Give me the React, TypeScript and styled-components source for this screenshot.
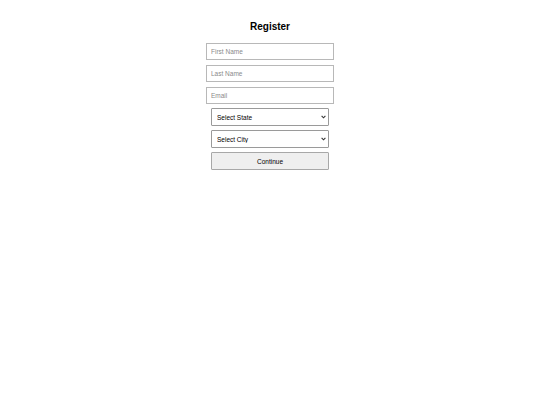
import React from "react";
import styled, { createGlobalStyle } from "styled-components";

const GlobalStyle = createGlobalStyle`
  body {
    margin: 0;
    background: #ffffff;
    font-family: "Liberation Sans", Arial, sans-serif;
  }
`;

const Page = styled.div`
  display: flex;
  flex-direction: column;
  align-items: center;
  padding-top: 20px;
`;

const Title = styled.h2`
  margin: 0 0 10px;
  font-size: 10px;
  line-height: 13px;
  font-weight: 700;
  color: #000;
`;

const Form = styled.form`
  display: flex;
  flex-direction: column;
  align-items: center;
  gap: 5px;
  width: 128px;
`;

const TextInput = styled.input`
  box-sizing: border-box;
  width: 128px;
  height: 17px;
  padding: 0 4px;
  border: 1px solid #b8b8b8;
  border-radius: 0;
  font-family: "Liberation Sans", Arial, sans-serif;
  font-size: 6.5px;
  color: #000;
  outline: none;

  &::placeholder {
    color: #8a8a8a;
  }
`;

const SelectGroup = styled.div`
  display: flex;
  flex-direction: column;
  align-items: center;
  gap: 4px;
  margin-top: -1px;
`;

const SelectWrap = styled.div`
  position: relative;
  width: 118px;
  height: 18px;
`;

const Select = styled.select`
  display: block;
  appearance: none;
  box-sizing: border-box;
  width: 100%;
  height: 100%;
  margin: 0;
  padding: 0 10px 0 5px;
  border: 1px solid #9a9a9a;
  border-radius: 1px;
  background: #fff;
  font-family: "Liberation Sans", Arial, sans-serif;
  font-size: 6.5px;
  color: #000;
  outline: none;
`;

const Chevron = styled.svg`
  position: absolute;
  right: 3px;
  top: 7px;
  width: 5px;
  height: 4px;
  pointer-events: none;
`;

const Button = styled.button`
  box-sizing: border-box;
  width: 118px;
  height: 18px;
  margin: 0;
  border: 1px solid #a8a8a8;
  border-radius: 1px;
  background: #efefef;
  font-family: "Liberation Sans", Arial, sans-serif;
  font-size: 6.5px;
  color: #000;
  cursor: pointer;
`;

const Dropdown = ({ label }: { label: string }) => (
  <SelectWrap>
    <Select defaultValue="">
      <option value="">{label}</option>
    </Select>
    <Chevron viewBox="0 0 5 4">
      <path d="M0.6 0.8 L2.5 2.8 L4.4 0.8" fill="none" stroke="#333" strokeWidth="1.1" />
    </Chevron>
  </SelectWrap>
);

export default function App() {
  return (
    <>
      <GlobalStyle />
      <Page>
        <Title>Register</Title>
        <Form onSubmit={(e) => e.preventDefault()}>
          <TextInput placeholder="First Name" />
          <TextInput placeholder="Last Name" />
          <TextInput placeholder="Email" />
          <SelectGroup>
            <Dropdown label="Select State" />
            <Dropdown label="Select City" />
            <Button type="submit">Continue</Button>
          </SelectGroup>
        </Form>
      </Page>
    </>
  );
}
